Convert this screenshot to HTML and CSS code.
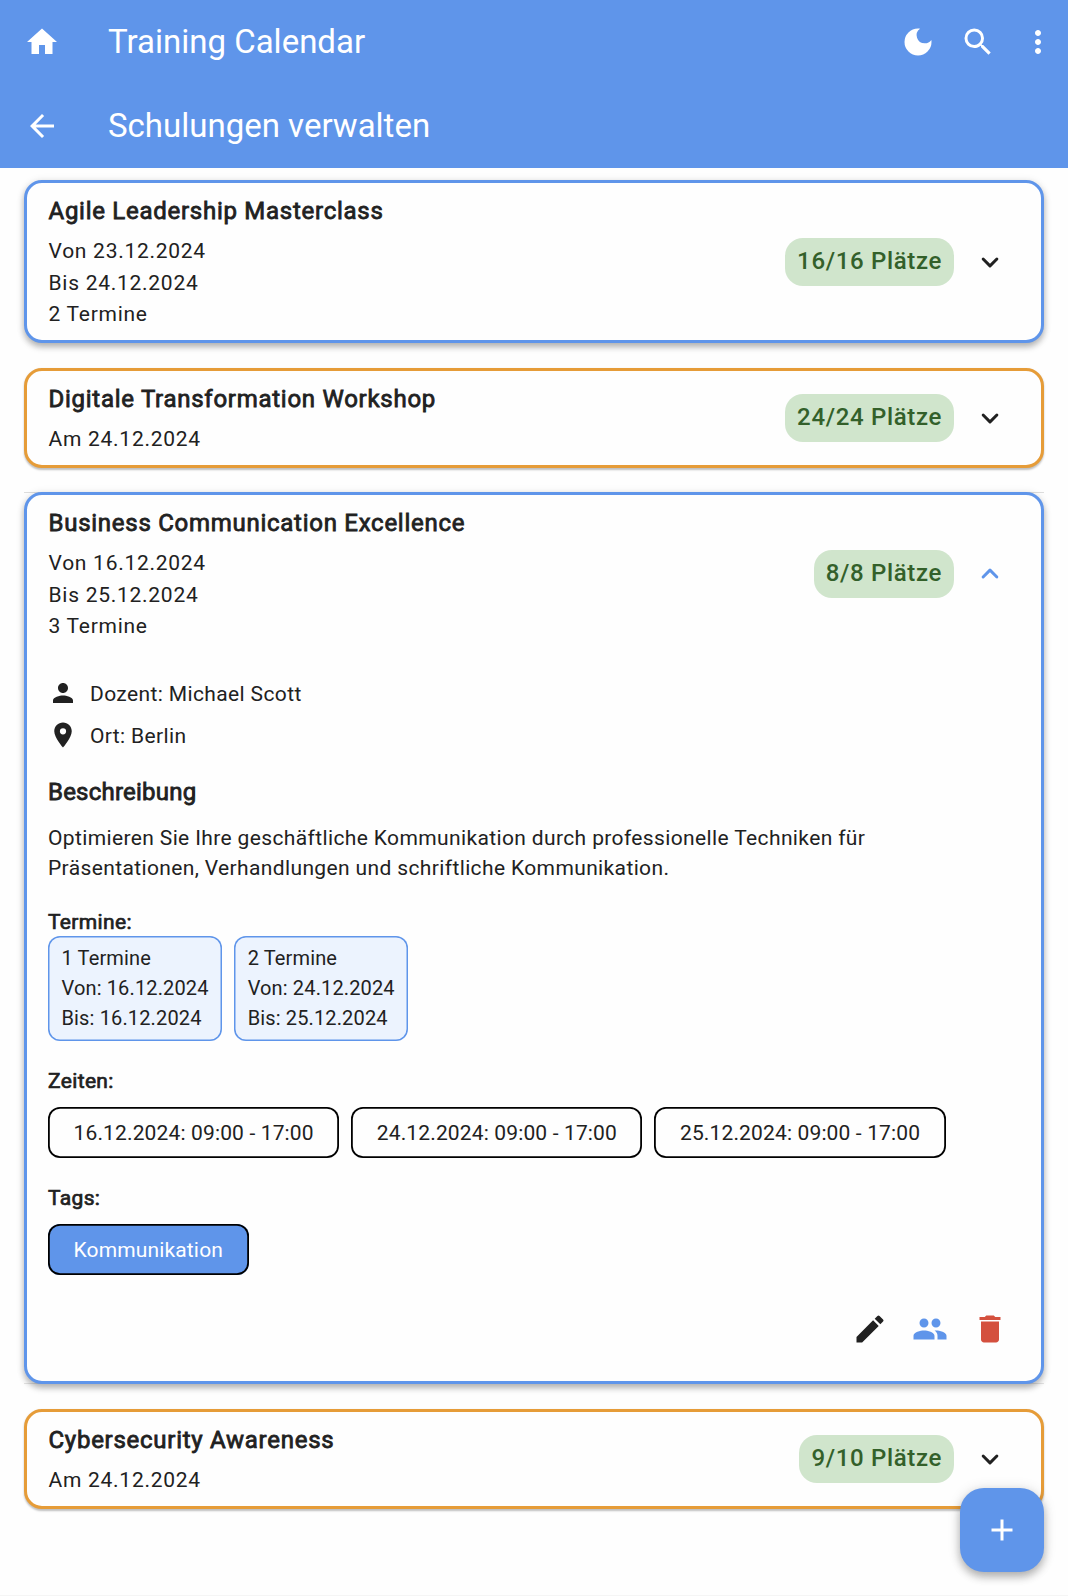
FILE: index.html
```html
<!DOCTYPE html>
<html lang="de">
<head>
<meta charset="utf-8">
<title>Training Calendar</title>
<link rel="stylesheet" href="styles.css">
</head>
<body>
<svg class="sprite" aria-hidden="true">
  <symbol id="more" viewBox="0 0 24 24"><path d="M15.88 9.29 12 13.17 8.12 9.29a1 1 0 0 0-1.41 1.41l4.59 4.59a1 1 0 0 0 1.41 0l4.59-4.59a1 1 0 0 0 0-1.41 1 1 0 0 0-1.42 0z"/></symbol>
</svg>
<header class="header">
  <div class="bar">
    <svg class="icon" viewBox="0 0 24 24"><path d="M10 20v-6h4v6h5v-8h3L12 3 2 12h3v8z"/></svg>
    <h1 class="bar-title title-app">Training Calendar</h1>
    <div class="bar-actions">
      <svg class="icon" viewBox="0 0 24 24"><path d="M12 3a9 9 0 1 0 9 9c0-.46-.04-.92-.1-1.36a5.389 5.389 0 0 1-4.4 2.26 5.403 5.403 0 0 1-3.14-9.8c-.44-.06-.9-.1-1.36-.1z"/></svg>
      <svg class="icon" viewBox="0 0 24 24"><path d="M15.5 14h-.79l-.28-.27A6.471 6.471 0 0 0 16 9.5 6.5 6.5 0 1 0 9.5 16c1.61 0 3.09-.59 4.23-1.57l.27.28v.79l5 4.99L20.49 19l-4.99-5zm-6 0C7.01 14 5 11.99 5 9.5S7.01 5 9.5 5 14 7.01 14 9.5 11.99 14 9.5 14z"/></svg>
      <svg class="icon" viewBox="0 0 24 24"><path d="M12 8c1.1 0 2-.9 2-2s-.9-2-2-2-2 .9-2 2 .9 2 2 2zm0 2c-1.1 0-2 .9-2 2s.9 2 2 2 2-.9 2-2-.9-2-2-2zm0 6c-1.1 0-2 .9-2 2s.9 2 2 2 2-.9 2-2-.9-2-2-2z"/></svg>
    </div>
  </div>
  <div class="bar">
    <svg class="icon" viewBox="0 0 24 24"><path d="M20 11H7.83l5.59-5.59L12 4l-8 8 8 8 1.41-1.41L7.83 13H20z"/></svg>
    <h2 class="bar-title title-page">Schulungen verwalten</h2>
  </div>
</header>
<main class="list">
  <article class="card card-blue">
    <div class="card-head">
      <div class="card-info">
        <h3 class="card-title">Agile Leadership Masterclass</h3>
        <p class="card-sub">Von 23.12.2024<br>Bis 24.12.2024<br>2 Termine</p>
      </div>
      <span class="badge">16/16 Plätze</span>
      <svg class="icon"><use href="#more"/></svg>
    </div>
  </article>
  <article class="card card-orange">
    <div class="card-head">
      <div class="card-info">
        <h3 class="card-title">Digitale Transformation Workshop</h3>
        <p class="card-sub">Am 24.12.2024</p>
      </div>
      <span class="badge">24/24 Plätze</span>
      <svg class="icon"><use href="#more"/></svg>
    </div>
  </article>
  <div class="expanded">
  <article class="card card-blue card-open">
    <div class="card-head">
      <div class="card-info">
        <h3 class="card-title">Business Communication Excellence</h3>
        <p class="card-sub">Von 16.12.2024<br>Bis 25.12.2024<br>3 Termine</p>
      </div>
      <span class="badge">8/8 Plätze</span>
      <svg class="icon icon-blue flip"><use href="#more"/></svg>
    </div>
    <div class="details">
      <div class="fact">
        <svg class="icon-small" viewBox="0 0 24 24"><path d="M12 12c2.21 0 4-1.79 4-4s-1.79-4-4-4-4 1.79-4 4 1.79 4 4 4zm0 2c-2.67 0-8 1.34-8 4v2h16v-2c0-2.66-5.33-4-8-4z"/></svg>
        <span class="fact-text">Dozent: Michael Scott</span>
      </div>
      <div class="fact">
        <svg class="icon-small" viewBox="0 0 24 24"><path d="M12 2C8.13 2 5 5.13 5 9c0 5.25 7 13 7 13s7-7.75 7-13c0-3.87-3.13-7-7-7zm0 9.5a2.5 2.5 0 0 1 0-5 2.5 2.5 0 0 1 0 5z"/></svg>
        <span class="fact-text">Ort: Berlin</span>
      </div>
      <h4 class="section-title">Beschreibung</h4>
      <p class="description">Optimieren Sie Ihre geschäftliche Kommunikation durch professionelle Techniken für Präsentationen, Verhandlungen und schriftliche Kommunikation.</p>
      <h5 class="label">Termine:</h5>
      <div class="row">
        <div class="slot">1 Termine<br>Von: 16.12.2024<br>Bis: 16.12.2024</div>
        <div class="slot">2 Termine<br>Von: 24.12.2024<br>Bis: 25.12.2024</div>
      </div>
      <h5 class="label">Zeiten:</h5>
      <div class="row row-chips">
        <span class="chip">16.12.2024: 09:00 - 17:00</span>
        <span class="chip">24.12.2024: 09:00 - 17:00</span>
        <span class="chip">25.12.2024: 09:00 - 17:00</span>
      </div>
      <h5 class="label">Tags:</h5>
      <div class="row row-chips">
        <span class="chip chip-tag">Kommunikation</span>
      </div>
      <div class="actions">
        <svg class="icon" viewBox="0 0 24 24"><path d="M3 17.25V21h3.75L17.81 9.94l-3.75-3.75L3 17.25zM20.71 7.04a.996.996 0 0 0 0-1.41l-2.34-2.34a.996.996 0 0 0-1.41 0l-1.83 1.83 3.75 3.75 1.83-1.83z"/></svg>
        <svg class="icon icon-blue" viewBox="0 0 24 24"><path d="M16 11c1.66 0 2.99-1.34 2.99-3S17.66 5 16 5s-3 1.34-3 3 1.34 3 3 3zm-8 0c1.66 0 2.99-1.34 2.99-3S9.66 5 8 5 5 6.34 5 8s1.34 3 3 3zm0 2c-2.33 0-7 1.17-7 3.5V19h14v-2.5c0-2.33-4.67-3.5-7-3.5zm8 0c-.29 0-.62.02-.97.05 1.16.84 1.97 1.97 1.97 3.45V19h6v-2.5c0-2.33-4.67-3.5-7-3.5z"/></svg>
        <svg class="icon icon-red" viewBox="0 0 24 24"><path d="M6 19c0 1.1.9 2 2 2h8c1.1 0 2-.9 2-2V7H6v12zM19 4h-3.5l-1-1h-5l-1 1H5v2h14V4z"/></svg>
      </div>
    </div>
  </article>
  </div>
  <article class="card card-orange">
    <div class="card-head">
      <div class="card-info">
        <h3 class="card-title">Cybersecurity Awareness</h3>
        <p class="card-sub">Am 24.12.2024</p>
      </div>
      <span class="badge">9/10 Plätze</span>
      <svg class="icon"><use href="#more"/></svg>
    </div>
  </article>
</main>
<button class="fab" aria-label="Neu">
  <svg class="icon" viewBox="0 0 24 24"><path d="M19 13h-6v6h-2v-6H5v-2h6V5h2v6h6z"/></svg>
</button>
</body>
</html>
```
FILE: styles.css
```css
:root {
  --blue: #5f95ea;
  --orange: #e69c38;
  --ink: #212121;
}
* { box-sizing: border-box; margin: 0; padding: 0; }
body {
  height: 1596px;
  overflow: hidden;
  background: #fefefe;
  border-bottom: 1px solid #f5f5f5;
  color: var(--ink);
  font-family: Roboto, sans-serif;
  font-size: 21px;
  line-height: 30px;
}
svg { display: block; flex: none; fill: currentColor; }
.sprite { position: absolute; width: 0; height: 0; }
.icon { width: 36px; height: 36px; }
.icon-small { width: 30px; height: 30px; }
.icon-blue { color: var(--blue); }
.icon-red { color: #d4503e; }
.flip { transform: rotate(180deg); }

.header { background: var(--blue); color: #fff; }
.bar {
  display: flex;
  align-items: center;
  height: 84px;
  padding: 0 12px 0 24px;
}
.bar-title {
  flex: 1;
  padding-left: 48px;
  font-size: 33px;
  font-weight: 400;
  line-height: 42px;
}
.bar-actions { display: flex; gap: 24px; }

.list {
  display: flex;
  flex-direction: column;
  gap: 24px;
  padding: 12px 24px;
}
.card {
  border: 3px solid var(--blue);
  border-radius: 18px;
  background: #fefefe;
}
.card-blue { box-shadow: 0 4px 6px rgba(0, 0, 0, .26), 0 1px 9px rgba(0, 0, 0, .1); }
.card-orange {
  margin: .1px 0 -.1px;
  border-color: var(--orange);
  box-shadow: 0 1.5px 2px rgba(0, 0, 0, .25);
}
.expanded { background: linear-gradient(#ddd, #ddd) top / 100% 1px no-repeat, linear-gradient(#e4e4e4, #e4e4e4) bottom / 100% 1px no-repeat; }
.card-open { height: 892.5px; }
.card-head {
  display: flex;
  align-items: center;
  padding: 10.25px 33px 9.9px 21.5px;
}
.card-info { flex: 1; }
.card-title, .section-title {
  font-size: 24px;
  font-weight: 400;
  line-height: 36px;
  -webkit-text-stroke: .8px currentColor;
}
.card-title { letter-spacing: .73px; }
.card-sub {
  margin-top: 6.85px;
  line-height: 31.5px;
  letter-spacing: .73px;
}
.badge {
  margin-right: 18px;
  padding: 5px 12px 7px;
  border-radius: 18px;
  background: #d0e5cc;
  color: #33602a;
  font-size: 24px;
  font-weight: 500;
  line-height: 36px;
  letter-spacing: .66px;
}

.details { padding: 25.5px 33px 0 21px; }
.fact {
  display: flex;
  align-items: center;
  gap: 12px;
  height: 30px;
  margin-bottom: 12px;
  letter-spacing: .375px;
}
.fact-text { padding-top: 2px; }
.section-title { margin-top: 24px; letter-spacing: .22px; }
.description { margin-top: 13px; letter-spacing: .37px; }
.label {
  margin-top: 24px;
  padding-top: 2px;
  font-size: 21px;
  font-weight: 400;
  line-height: 28px;
  letter-spacing: .35px;
  -webkit-text-stroke: .7px currentColor;
}
.description + .label { margin-top: 23px; }
.row { display: flex; gap: 12px; }
.row-chips { margin-top: 12px; }
.slot {
  padding: 7px 13.5px 8px;
  border-radius: 12px;
  background: #ecf3fe;
  box-shadow: inset 0 0 0 1.5px var(--blue);
  font-size: 20px;
  letter-spacing: .14px;
}
.chip {
  padding: 11px 25.5px 10px;
  border-radius: 12px;
  box-shadow: inset 0 0 0 1.8px #000;
  letter-spacing: .145px;
}
.chip-tag { background: var(--blue); color: #fff; }
.actions {
  display: flex;
  justify-content: flex-end;
  gap: 24px;
  margin-top: 36px;
}
.fab {
  position: absolute;
  right: 24px;
  bottom: 24px;
  display: flex;
  align-items: center;
  justify-content: center;
  width: 84px;
  height: 84px;
  border: 0;
  border-radius: 24px;
  background: var(--blue);
  color: #fff;
  box-shadow: 0 5px 8px rgba(0, 0, 0, .26), 0 1px 14px rgba(0, 0, 0, .12);
}
```
